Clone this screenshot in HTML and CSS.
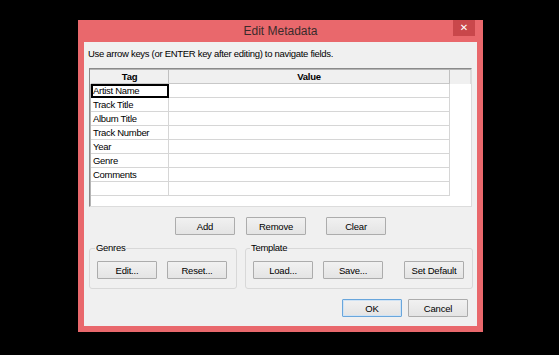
FILE: index.html
```html
<!DOCTYPE html>
<html lang="en">
<head>
    <meta charset="UTF-8">
    <title>Edit Metadata</title>
    <link rel="stylesheet" href="styles.css">
</head>
<body>
    <div class="window">
        <div class="titlebar">
            <span class="title">Edit Metadata</span>
            <span class="close">&#x2715;</span>
        </div>
        <div class="client">
            <p class="hint">Use arrow keys (or ENTER key after editing) to navigate fields.</p>

            <div class="grid">
                <div class="row head">
                    <div class="cell tag">Tag</div>
                    <div class="cell value">Value</div>
                    <div class="filler"></div>
                </div>
                <div class="row">
                    <div class="cell tag focus">Artist Name</div>
                    <div class="cell value"></div>
                </div>
                <div class="row">
                    <div class="cell tag">Track Title</div>
                    <div class="cell value"></div>
                </div>
                <div class="row">
                    <div class="cell tag">Album Title</div>
                    <div class="cell value"></div>
                </div>
                <div class="row">
                    <div class="cell tag">Track Number</div>
                    <div class="cell value"></div>
                </div>
                <div class="row">
                    <div class="cell tag">Year</div>
                    <div class="cell value"></div>
                </div>
                <div class="row">
                    <div class="cell tag">Genre</div>
                    <div class="cell value"></div>
                </div>
                <div class="row">
                    <div class="cell tag">Comments</div>
                    <div class="cell value"></div>
                </div>
                <div class="row">
                    <div class="cell tag"></div>
                    <div class="cell value"></div>
                </div>
            </div>

            <div class="actions">
                <button class="btn">Add</button>
                <button class="btn">Remove</button>
                <button class="btn clear">Clear</button>
            </div>

            <div class="groups">
                <fieldset class="group genres">
                    <legend>Genres</legend>
                    <button class="btn">Edit...</button>
                    <button class="btn">Reset...</button>
                </fieldset>
                <fieldset class="group template">
                    <legend>Template</legend>
                    <button class="btn">Load...</button>
                    <button class="btn">Save...</button>
                    <button class="btn set-default">Set Default</button>
                </fieldset>
            </div>

            <div class="dialog-buttons">
                <button class="btn default">OK</button>
                <button class="btn">Cancel</button>
            </div>
        </div>
    </div>
</body>
</html>
```

FILE: styles.css
```css
body {
    margin: 0;
    padding: 20px 0 0 78px;
    background: #000;
    font-family: 'Liberation Sans', Arial, sans-serif;
    font-size: 9.5px;
    letter-spacing: -0.3px;
    color: #000;
}

.window {
    width: 393px;
    padding: 0 6px 6px;
    background: #e9686c;
}

.titlebar {
    display: grid;
    grid-template-columns: 1fr auto 1fr;
    height: 22px;
    margin: 0 -6px;
}

.title {
    grid-column: 2;
    align-self: center;
    font-size: 12px;
    letter-spacing: 0;
    color: #3a2b2b;
}

.close {
    grid-column: 3;
    justify-self: end;
    width: 22px;
    height: 16px;
    margin-right: 8px;
    background: #c9474b;
    color: #fff;
    font-family: 'DejaVu Sans', sans-serif;
    font-size: 10px;
    font-weight: bold;
    letter-spacing: 0;
    line-height: 16px;
    text-align: center;
}

.client {
    height: 284px;
    background: #f0f0f0;
}

.hint {
    margin: 0;
    padding: 5px 0 0 4px;
    line-height: 13px;
}

/* テーブル部分 */
.grid {
    margin: 8px 5px 0;
    height: 137px;
    background: #fff;
    border: 1px solid #dcdcdc;
    border-top-color: #8a8a8a;
    border-left-color: #8a8a8a;
    box-shadow: inset 1px 1px 0 #b4b4b4;
}

.row {
    display: flex;
    height: 14px;
}

.cell {
    box-sizing: border-box;
    height: 14px;
    padding: 0 2px;
    line-height: 13px;
    border-bottom: 1px solid #d6d6d6;
    border-right: 1px solid #d6d6d6;
    white-space: nowrap;
}

.tag {
    width: 78px;
    margin-left: 1px;
}

.value {
    width: 281px;
}

.head {
    background: #f0f0f0;
    margin-top: 1px;
}

.head .cell {
    font-weight: bold;
    text-align: center;
    border-bottom-color: #c8c8c8;
    border-right-color: #c0c0c0;
}

.filler {
    flex: 1;
    border-right: 1px solid #dcdcdc;
}

.focus {
    border: 1px solid #000;
    box-shadow: inset 0 0 0 1px #000;
    line-height: 12px;
    padding-left: 1px;
}

/* ボタン */
.btn {
    box-sizing: border-box;
    width: 60px;
    height: 18px;
    padding: 0;
    font-family: inherit;
    font-size: 9.5px;
    letter-spacing: -0.2px;
    color: #000;
    background: linear-gradient(#f1f1f1, #e4e4e4);
    border: 1px solid #acacac;
    border-radius: 1px;
}

.btn.default {
    border-color: #69a6dc;
    box-shadow: inset 0 0 0 1px #cfe3f5;
}

.actions {
    display: flex;
    gap: 11px;
    margin-top: 10px;
    padding-left: 91px;
}

.actions .clear {
    margin-left: 9px;
}

.groups {
    display: flex;
    gap: 8px;
    margin: 7px 4px 0 5px;
}

.group {
    box-sizing: border-box;
    margin: 0;
    padding: 7px 8px 7px 7px;
    border: 1px solid #d8d8d8;
    border-radius: 3px;
    display: flex;
    gap: 10px;
    height: 47px;
}

.group legend {
    padding: 0 1px;
    margin-left: -2px;
    line-height: 12px;
}

.genres {
    width: 148px;
}

.template {
    flex: 1;
}

.template legend {
    margin-left: -3px;
}

.template .set-default {
    margin-left: 11px;
}

.dialog-buttons {
    display: flex;
    justify-content: flex-end;
    gap: 6px;
    margin-top: 10px;
    padding-right: 9px;
}
```
